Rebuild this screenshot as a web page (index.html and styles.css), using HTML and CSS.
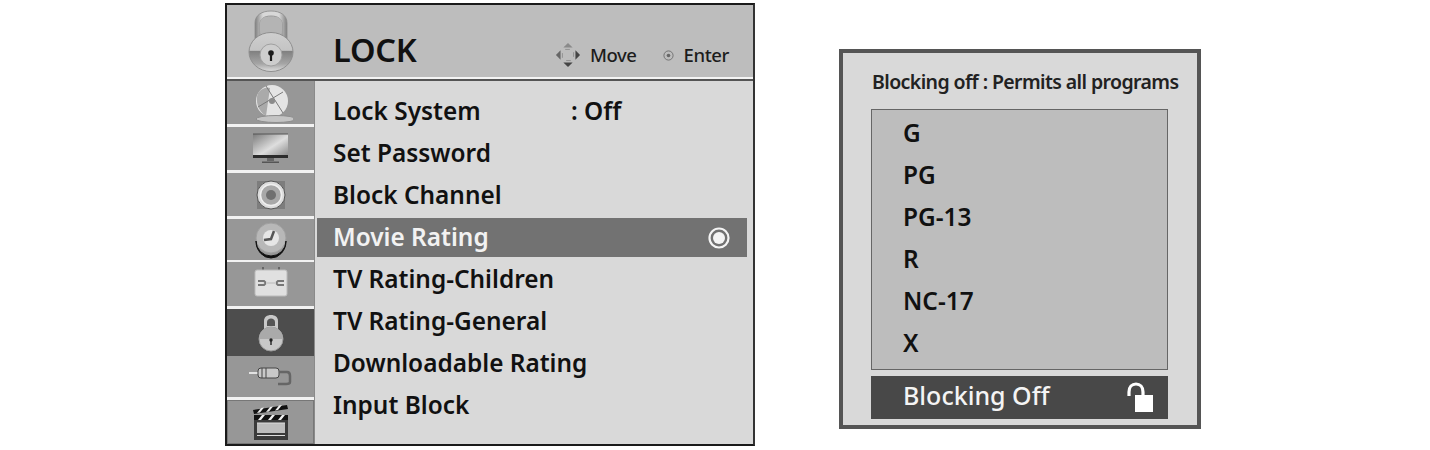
FILE: index.html
```html
<!DOCTYPE html>
<html lang="en">
<head>
<meta charset="utf-8">
<title>Lock menu</title>
<link rel="stylesheet" href="styles.css">
</head>
<body>
<main class="page">
  <section class="osd">
    <header class="osd-head">
      <svg class="lock-big" viewBox="0 0 46 62">
        <defs>
          <linearGradient id="sh" x1="0" x2="0" y1="0" y2="1"><stop offset="0" stop-color="#cfcfcf"/><stop offset=".46" stop-color="#c4c4c4"/><stop offset=".47" stop-color="#7f7f7f"/><stop offset=".8" stop-color="#a5a5a5"/><stop offset="1" stop-color="#dedede"/></linearGradient>
          <linearGradient id="sk" x1="0" x2="1" y1="0" y2="0"><stop offset="0" stop-color="#7f7f7f"/><stop offset=".25" stop-color="#d8d8d8"/><stop offset=".75" stop-color="#d8d8d8"/><stop offset="1" stop-color="#7f7f7f"/></linearGradient>
        </defs>
        <path d="M7 30V13C7 5 14 1 23 1s16 4 16 12v17h-5V14c0-5-4-8-11-8s-11 3-11 8v16z" fill="url(#sk)" stroke="#8a8a8a" stroke-width=".8"/>
        <rect x="12" y="7" width="22" height="20" rx="6" fill="#b4b4b4"/>
        <ellipse cx="23" cy="42" rx="22" ry="19.500" fill="url(#sh)" stroke="#8f8f8f"/>
        <circle cx="23" cy="45" r="11" fill="#cdcdcd" stroke="#a0a0a0"/>
        <circle cx="23" cy="43" r="2.800" fill="#1c1c1c"/>
        <rect x="21.900" y="44" width="2.200" height="7" fill="#1c1c1c"/>
      </svg>
      <h1 class="osd-title">LOCK</h1>
      <div class="hints">
        <svg class="move-ic" viewBox="0 0 28 28"><path d="M14 1l5 5H9z" fill="#8a8a8a"/><path d="M14 27l-5-5h10z" fill="#444"/><path d="M1 14l5-5v10z" fill="#666"/><path d="M27 14l-5 5V9z" fill="#444"/><path d="M8 8h12v12H8z" fill="none" stroke="#8f8f8f" stroke-dasharray="5 7" stroke-dashoffset="-3"/></svg>
        <span class="hint-move">Move</span>
        <svg class="enter-ic" viewBox="0 0 12 12"><circle cx="6" cy="6" r="5" fill="none" stroke="#666" stroke-width=".9"/><circle cx="6" cy="6" r="2" fill="#666"/></svg>
        <span>Enter</span>
      </div>
    </header>
    <div class="osd-body">
      <nav class="side">
        <div class="tab">
          <svg class="ic" viewBox="0 0 44 40"><circle cx="23" cy="18" r="16" fill="#e4e4e4"/><path d="M9 10C6 18 9 28 17 33l4-28C16 4 12 6 9 10z" fill="#aaa"/><path d="M9 24l25-15M17 3l17 27" stroke="#7a7a7a" fill="none"/><circle cx="23" cy="18" r="3" fill="#8b8b8b"/><ellipse cx="27" cy="36" rx="20" ry="3.500" fill="#c4c4c4" stroke="#8d8d8d"/></svg>
        </div>
        <div class="tab">
          <svg class="ic" viewBox="0 0 44 40"><defs><linearGradient id="tv" x1="0" x2="1" y1="0" y2="1"><stop offset="0" stop-color="#7c7c7c"/><stop offset=".55" stop-color="#dedede"/><stop offset="1" stop-color="#858585"/></linearGradient></defs><rect x="4" y="5" width="35" height="23" fill="url(#tv)"/><path d="M4 5h35" stroke="#555"/><rect x="4" y="26" width="35" height="3" fill="#2c2c2c"/><path d="M18 29h7v3h-7z" fill="#666"/><path d="M13 32.500h17v1.500H13z" fill="#555"/></svg>
        </div>
        <div class="tab">
          <svg class="ic" viewBox="0 0 44 40"><rect x="8" y="6" width="28" height="28" fill="#7d7d7d"/><circle cx="22" cy="20" r="14" fill="#dcdcdc" stroke="#555"/><circle cx="22" cy="20" r="10.500" fill="#a8a8a8" stroke="#efefef" stroke-width="1.500"/><circle cx="22" cy="20" r="5" fill="#707070"/></svg>
        </div>
        <div class="tab h41 gap2">
          <svg class="ic" viewBox="0 0 44 40"><circle cx="22" cy="18" r="15" fill="#b8b8b8" stroke="#a0a0a0"/><path d="M7 21a15 15 0 0 0 30 0 15 17 0 0 1-30 0z" fill="#111" stroke="#111"/><circle cx="22" cy="18" r="8" fill="#e6e6e6"/><path d="M25 11l-3 8-7 1" fill="none" stroke="#555" stroke-width="2.500"/></svg>
        </div>
        <div class="tab h44">
          <svg class="ic" viewBox="0 0 44 40"><path d="M14 3v4M30 3v4" stroke="#666" stroke-width="2"/><rect x="6" y="6" width="32" height="26" rx="2" fill="#e0e0e0" stroke="#bbb"/><path d="M9 17h6l2 2-2 2H9M35 17h-6l-2 2 2 2h6" fill="none" stroke="#777" stroke-width="2"/><path d="M17 19h10" stroke="#ccc" stroke-width="2"/></svg>
        </div>
        <div class="tab tab-on">
          <svg class="ic" viewBox="0 0 44 40"><path d="M15 20V8c0-4 3-6 7-6s7 2 7 6v12z" fill="#c9c9c9"/><path d="M18 13V9c0-2 2-3.500 4-3.500S26 7 26 9v4z" fill="#555"/><ellipse cx="22" cy="26" rx="12" ry="12" fill="#c8c8c8" stroke="#999"/><path d="M10 26a12 12 0 0 1 24 0z" fill="#aaa"/><circle cx="22" cy="27" r="1.700" fill="#222"/><rect x="21.300" y="27" width="1.400" height="5" fill="#222"/></svg>
        </div>
        <div class="tab h41">
          <svg class="ic" viewBox="0 0 44 40"><path d="M0 16h9" stroke="#e2e2e2" stroke-width="2"/><rect x="9" y="11" width="21" height="10" rx="3" fill="#c8c8c8" stroke="#444"/><path d="M13 11v10M17 11v10" stroke="#444"/><path d="M30 15h8c3 0 3 2 3 4v6c0 2-2 2-4 2h-8" fill="none" stroke="#666" stroke-width="2.500"/></svg>
        </div>
        <div class="tab tab-last">
          <svg class="ic" viewBox="0 0 44 40"><rect x="5" y="18" width="34" height="20" fill="#3a3a3a"/><rect x="8" y="21" width="28" height="10" fill="#bdbdbd"/><path d="M8 21h28M8 33.500h28" stroke="#ddd"/><path d="M4 8l34-5 1 4-34 5zM5 13h34v5H5z" fill="#111"/><path d="M8 11l4-5 3-.500-4 5zM17 10l4-5 3-.500-4 5zM26 8.500l4-5 3-.500-4 5zM9 18l4-5h3l-4 5zM19 18l4-5h3l-4 5zM29 18l4-5h3l-4 5z" fill="#eee"/></svg>
        </div>
      </nav>
      <ul class="menu">
        <li class="row"><span class="row-label">Lock System</span><span class="row-val">: Off</span></li>
        <li class="row">Set Password</li>
        <li class="row">Block Channel</li>
        <li class="row row-on">Movie Rating
          <svg class="radio" viewBox="0 0 24 24"><circle cx="12" cy="12" r="9.500" fill="none" stroke="#f4f4f4" stroke-width="2.200"/><circle cx="12" cy="12" r="6" fill="#f4f4f4"/></svg>
        </li>
        <li class="row">TV Rating-Children</li>
        <li class="row">TV Rating-General</li>
        <li class="row">Downloadable Rating</li>
        <li class="row">Input Block</li>
      </ul>
    </div>
  </section>

  <section class="popup">
    <p class="popup-title">Blocking off : Permits all programs</p>
    <ul class="ratings">
      <li>G</li>
      <li>PG</li>
      <li>PG-13</li>
      <li>R</li>
      <li>NC-17</li>
      <li>X</li>
    </ul>
    <div class="state">
      <span class="state-label">Blocking Off</span>
      <svg class="unlock" viewBox="0 0 28 32"><path d="M3 14V10C3 5 6 2 10 2s7 3 7 8v5" fill="none" stroke="#fff" stroke-width="3.200"/><rect x="9" y="13" width="18" height="17" fill="#fff"/></svg>
    </div>
  </section>
</main>
</body>
</html>
```
FILE: styles.css
```css
* { box-sizing: border-box; }
html, body { margin: 0; padding: 0; background: #fff; }
body { width: 1430px; height: 450px; overflow: hidden; font-family: "Noto Sans", "Open Sans", sans-serif; color: #111; }
ul { list-style: none; margin: 0; padding: 0; }
.page { display: flex; align-items: flex-start; padding: 3px 0 0 225px; }

.osd { width: 530px; height: 443px; border: 2px solid #1a1a1a; border-right-color: #333; background: #d9d9d9; display: flex; flex-direction: column; }
.osd-head { height: 74px; flex: none; background: #bdbdbd; border-bottom: 2px solid #f4f4f4; display: flex; align-items: center; padding-left: 21px; }
.lock-big { width: 46px; height: 62px; flex: none; }
.osd-title { margin: 18px 0 0 39px; font-size: 32.5px; line-height: 40px; font-weight: 600; letter-spacing: -.2px; }
.hints { margin-left: auto; margin-top: 28px; padding-right: 24px; display: flex; align-items: center; font-size: 18.5px; line-height: 26px; font-weight: 500; letter-spacing: -.4px; color: #1c1c1c; }
.move-ic { width: 26px; height: 26px; margin-right: 9px; }
.hint-move { margin-right: 26px; }
.enter-ic { width: 11px; height: 11px; margin-right: 10px; }

.osd-body { flex: 1; display: flex; border-top: 2px solid #555; min-height: 0; }
.side { width: 88px; flex: none; border-right: 1px solid #8a8a8a; display: flex; flex-direction: column; background: #f2f2f2; }
.tab { background: #979797; display: flex; justify-content: center; align-items: center; height: 43px; margin-bottom: 3px; flex: none; }
.h41 { height: 41px; }
.h44 { height: 44px; }
.gap2 { margin-bottom: 2px; }
.ic { width: 44px; height: 40px; }
.tab-on { background: #4d4d4d; height: 47px; margin-bottom: 0; }
.tab-last { height: 44px; margin: 0; border: 1px solid #777; }

.menu { flex: 1; padding: 9px 6px 0 2px; }
.row { height: 42px; padding-left: 16px; display: flex; align-items: center; font-size: 24.4px; font-weight: 600; line-height: 42px; }
.row-label { width: 238px; }
.row-on { background: #727272; color: #f2f2f2; justify-content: space-between; padding: 0 16px 2px; height: 39px; margin: 2px 0 1px; }
.radio { width: 24px; height: 24px; margin-top: 2px; }

.popup { margin: 46px 0 0 84px; width: 362px; height: 380px; border: 4px solid #555; background: #d9d9d9; padding: 16px 29px 0 28px; display: flex; flex-direction: column; }
.popup-title { margin: 0 0 14px 1px; font-size: 19.5px; line-height: 26px; font-weight: 600; letter-spacing: -.6px; white-space: nowrap; color: #222; }
.ratings { height: 261px; background: #bdbdbd; border: 1px solid #666; padding: 2px 0 0 31px; }
.ratings li { height: 42px; line-height: 42px; font-size: 24.4px; font-weight: 600; }
.state { margin-top: 6px; height: 43px; background: #484848; color: #f4f4f4; display: flex; align-items: center; justify-content: space-between; padding: 0 14px 0 32px; font-size: 25px; font-weight: 500; }
.state-label { margin-top: -6px; }
.unlock { width: 28px; height: 32px; }
```
